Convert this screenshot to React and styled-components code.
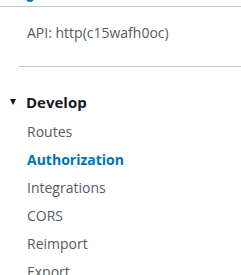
import React from 'react';
import styled, { createGlobalStyle } from 'styled-components';

const GlobalStyle = createGlobalStyle`
  body {
    margin: 0;
    background: #ffffff;
    font-family: "Open Sans", "Liberation Sans", Arial, sans-serif;
  }
`;

const Panel = styled.nav`
  width: 241px;
  height: 275px;
  overflow: hidden;
  background: #ffffff;
`;

const TopBar = styled.div`
  height: 6px;
  border-bottom: 1px solid #c6c6cd;
  position: relative;
`;

const BlueTab = styled.span`
  position: absolute;
  left: 26px;
  top: -6px;
  width: 8px;
  height: 8px;
  border-radius: 50%;
  background: #0073bb;
`;

const ApiSection = styled.div`
  padding: 16px 0 24px 27px;
  font-size: 14px;
  line-height: 19px;
  color: #545b64;
`;

const Divider = styled.hr`
  margin: 0 0 0 19px;
  border: none;
  border-top: 1px solid #c6c6cd;
`;

const Group = styled.div`
  padding-top: 25px;
`;

const GroupHeader = styled.div`
  display: flex;
  align-items: center;
  gap: 10px;
  padding-left: 10px;
  font-size: 15px;
  font-weight: 700;
  color: #16191f;
  height: 20px;
`;

const Caret = styled.span`
  width: 0;
  height: 0;
  border-left: 3.5px solid transparent;
  border-right: 3.5px solid transparent;
  border-top: 6px solid #16191f;
`;

const List = styled.ul`
  list-style: none;
  margin: 5px 0 0;
  padding: 0 0 0 27px;
  display: flex;
  flex-direction: column;
`;

const Item = styled.li`
  height: 28px;
  display: flex;
  align-items: center;
  font-size: 14px;
  font-weight: ${(p) => (p.$active ? 700 : 400)};
  color: ${(p) => (p.$active ? '#0073bb' : '#545b64')};
`;

const items = ['Routes', 'Authorization', 'Integrations', 'CORS', 'Reimport', 'Export'];

export default function App() {
  return (
    <>
      <GlobalStyle />
      <Panel>
        <TopBar>
          <BlueTab />
        </TopBar>
        <ApiSection>API: http(c15wafh0oc)</ApiSection>
        <Divider />
        <Group>
          <GroupHeader>
            <Caret />
            Develop
          </GroupHeader>
          <List>
            {items.map((name) => (
              <Item key={name} $active={name === 'Authorization'}>
                {name}
              </Item>
            ))}
          </List>
        </Group>
      </Panel>
    </>
  );
}
